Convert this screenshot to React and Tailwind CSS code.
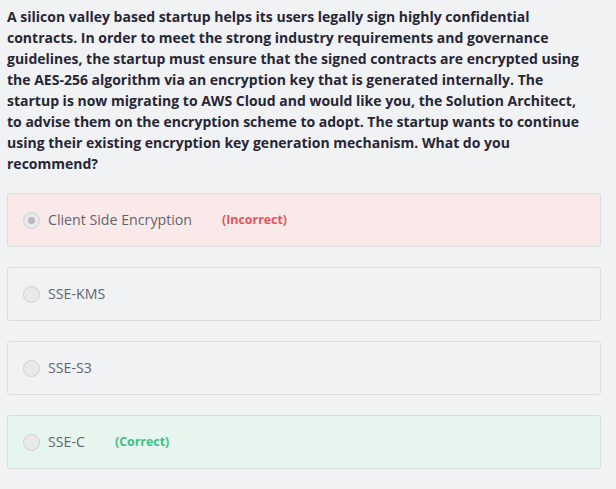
const options = [
  { label: "Client Side Encryption", status: "incorrect", checked: true },
  { label: "SSE-KMS" },
  { label: "SSE-S3" },
  { label: "SSE-C", status: "correct" },
];

const Radio = ({ checked }) => (
  <span className="w-[17px] h-[17px] rounded-full border border-[#cfcfd2] bg-[#e9e9eb] flex items-center justify-center shrink-0">
    {checked && <span className="w-[7px] h-[7px] rounded-full bg-[#b9b9bc]" />}
  </span>
);

const App = () => {
  return (
    <div className="min-h-screen bg-[#f1f2f4] px-[7px] pt-[6px] pb-4 font-['Open_Sans',sans-serif]">
      {/* question, broken where the reference breaks */}
      <p className="text-[14px] leading-[21px] font-bold text-[#272636] whitespace-nowrap">
        A silicon valley based startup helps its users legally sign highly confidential<br />
        contracts. In order to meet the strong industry requirements and governance<br />
        guidelines, the startup must ensure that the signed contracts are encrypted using<br />
        the AES-256 algorithm via an encryption key that is generated internally. The<br />
        startup is now migrating to AWS Cloud and would like you, the Solution Architect,<br />
        to advise them on the encryption scheme to adopt. The startup wants to continue<br />
        using their existing encryption key generation mechanism. What do you<br />
        recommend?
      </p>

      <div className="mt-[19px] flex flex-col gap-[20px] w-[594px]">
        {options.map((opt) => (
          <div
            key={opt.label}
            className={
              "h-[54px] rounded-[3px] border border-[#dcdcde] flex items-center pl-[15px] " +
              (opt.status === "incorrect"
                ? "bg-[#f9eae9]"
                : opt.status === "correct"
                ? "bg-[#e6f6ee]"
                : "bg-[#f1f2f4]")
            }
          >
            <Radio checked={opt.checked} />
            <span className="ml-[8px] text-[14.2px] text-[#626470]">{opt.label}</span>
            {opt.status === "incorrect" && (
              <span className="ml-[30px] text-[12.4px] font-bold text-[#e8525a]">(Incorrect)</span>
            )}
            {opt.status === "correct" && (
              <span className="ml-[30px] text-[12.4px] font-bold text-[#3cbf85]">(Correct)</span>
            )}
          </div>
        ))}
      </div>
    </div>
  );
};

export default App;
